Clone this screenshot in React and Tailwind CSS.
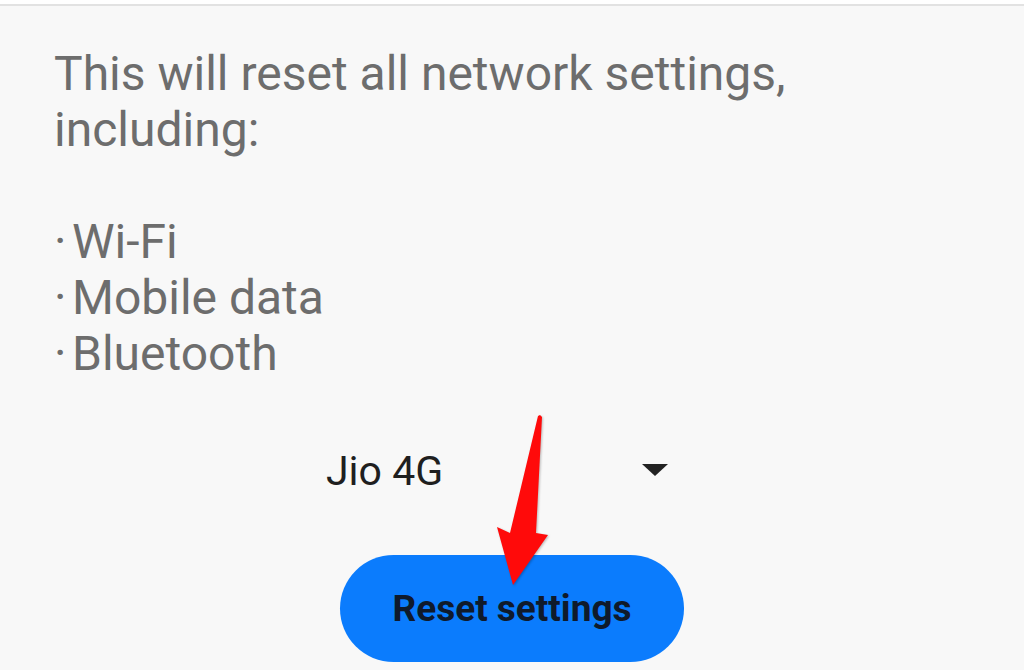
export default function App() {
  const items = ["Wi-Fi", "Mobile data", "Bluetooth"];

  return (
    <div className="relative w-[1024px] h-[670px] overflow-hidden bg-[#f8f8f8] font-['Roboto','Liberation_Sans',sans-serif]">
      <div className="h-[4px] bg-white" />
      <div className="h-[2px] bg-[#e2e2e2]" />

      <div className="pl-[54px] pt-[40px] text-[48px] leading-[56px] text-[#6d6d6d]">
        <p>
          This will reset all network settings,
          <br />
          including:
        </p>
        <ul className="mt-[56px]">
          {items.map((it) => (
            <li key={it} className="flex">
              <span className="w-[18px]">·</span>
              <span>{it}</span>
            </li>
          ))}
        </ul>
      </div>

      <div className="mt-[65px] ml-[326px] w-[342px] h-[48px] flex items-center justify-between">
        <span className="text-[41px] leading-[48px] text-[#1f1f1f]">Jio 4G</span>
        <span className="w-0 h-0 mb-[3px] border-l-[13px] border-r-[13px] border-t-[12px] border-l-transparent border-r-transparent border-t-[#222]" />
      </div>

      <button className="mt-[60px] ml-[340px] w-[344px] h-[107px] rounded-full bg-[#0b7cfd] flex items-center justify-center">
        <span className="text-[37px] font-bold text-[#0f1a2b]">Reset settings</span>
      </button>

      {/* red annotation arrow */}
      <svg
        className="absolute left-[490px] top-[410px] w-[65px] h-[180px] drop-shadow-[1px_1px_1px_rgba(0,0,0,0.25)]"
        viewBox="490 410 65 180"
      >
        <polygon
          points="540,415 542,417 536,533 548,535 513,585 497,527 510,533 538,416"
          fill="#ff0a0a"
        />
      </svg>
    </div>
  );
}
